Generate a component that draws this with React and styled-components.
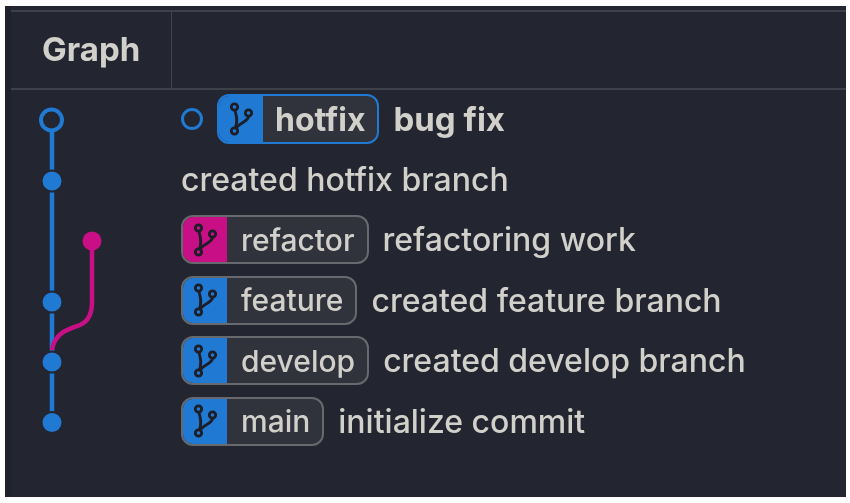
import React from 'react';
import styled, { createGlobalStyle } from 'styled-components';

const BLUE = '#2079d2';
const PINK = '#c90f86';
const BG = '#232631';

const Global = createGlobalStyle`
  html, body { margin: 0; padding: 0; background: #fff; }
`;

const Window = styled.div`
  margin: 6px 4px 0 5px;
  width: 841px;
  height: 491px;
  background: ${BG};
  display: flex;
  font-family: Inter, "Liberation Sans", sans-serif;
  color: #d2d0ca;
  filter: blur(0.7px);
  overflow: hidden;
`;

const Gutter = styled.div`
  width: 6px;
  background: #1f222c;
`;

const Main = styled.div`
  flex: 1;
  padding-top: 4px;
`;

const Header = styled.div`
  display: flex;
  height: 76px;
  border-top: 2px solid #3f414a;
  border-bottom: 2px solid #3f414a;
`;

const HeaderCell = styled.div`
  width: 161px;
  box-sizing: border-box;
  padding: 0 0 2px 31px;
  display: flex;
  align-items: center;
  font-size: 33px;
  font-weight: 700;
  border-right: 1px solid #43454e;
`;

const Body = styled.div`
  display: flex;
`;

const GraphCol = styled.svg`
  width: 170px;
  height: 370px;
  flex: none;
  display: block;
`;

const Rows = styled.div`
  display: flex;
  flex-direction: column;
  margin-top: -1px;
`;

const Row = styled.div`
  height: 60.4px;
  display: flex;
  align-items: center;
  gap: 14px;
  font-size: ${p => (p.$bold ? 33 : 32)}px;
  white-space: nowrap;
  font-weight: ${p => (p.$bold ? 700 : 450)};
`;

const HeadRing = styled.span`
  width: 16px;
  height: 16px;
  border: 3px solid ${BLUE};
  border-radius: 50%;
`;

const Chip = styled.span`
  display: flex;
  align-items: stretch;
  height: ${p => (p.$active ? 50 : 49)}px;
  box-sizing: border-box;
  border-radius: 12px;
  border: 2px solid ${p => (p.$active ? BLUE : '#67696e')};
  background: #30323c;
  overflow: hidden;
  font-size: ${p => (p.$active ? 32 : 30)}px;
`;

const ChipIcon = styled.span`
  width: ${p => (p.$active ? 47 : 44)}px;
  flex: none;
  background: ${p => p.$color};
  display: flex;
  align-items: center;
  justify-content: center;
`;

const ChipLabel = styled.span`
  padding: 0 12px 0 ${p => (p.$active ? 12 : 14)}px;
  display: flex;
  align-items: center;
`;

const BranchIcon = () => (
  <svg width="28" height="34" viewBox="0 0 28 34" fill="none" stroke="#1c1e28" strokeWidth="2.8">
    <circle cx="7.5" cy="5" r="3.2" />
    <circle cx="21.5" cy="11" r="3.2" />
    <circle cx="7.5" cy="29" r="3.2" />
    <path d="M8 8.5 C9.5 14 11 19 8.5 25.5" />
    <path d="M21.5 14.5 C21 20 13 20 9 26" />
  </svg>
);

const rows = [
  { text: 'bug fix', branch: 'hotfix', color: BLUE, head: true },
  { text: 'created hotfix branch' },
  { text: 'refactoring work', branch: 'refactor', color: PINK },
  { text: 'created feature branch', branch: 'feature', color: BLUE },
  { text: 'created develop branch', branch: 'develop', color: BLUE },
  { text: 'initialize commit', branch: 'main', color: BLUE },
];

const nodes = [91, 212, 272, 332.5];

const Graph = () => (
  <GraphCol viewBox="0 0 170 370">
    <path d="M41 30 V332" stroke={BLUE} strokeWidth="4.5" fill="none" />
    <circle cx="40.5" cy="30" r="10.5" fill={BG} stroke={BLUE} strokeWidth="4" />
    {nodes.map(y => (
      <circle key={y} cx="41" cy={y} r="10.5" fill={BLUE} stroke={BG} strokeWidth="2" />
    ))}
    <path d="M81 151 V212 C81 226 76 232 69 235 C60 239 44 241 41 260" stroke={PINK} strokeWidth="4.5" fill="none" />
    <circle cx="81" cy="151" r="9.5" fill={PINK} />
  </GraphCol>
);

export default function App() {
  return (
    <>
      <Global />
      <Window>
        <Gutter />
        <Main>
          <Header>
            <HeaderCell>Graph</HeaderCell>
          </Header>
          <Body>
            <Graph />
            <Rows>
              {rows.map(r => (
                <Row key={r.text} $bold={r.head}>
                  {r.head && <HeadRing />}
                  {r.branch && (
                    <Chip $active={r.head}>
                      <ChipIcon $color={r.color}><BranchIcon /></ChipIcon>
                      <ChipLabel $active={r.head}>{r.branch}</ChipLabel>
                    </Chip>
                  )}
                  <span>{r.text}</span>
                </Row>
              ))}
            </Rows>
          </Body>
        </Main>
      </Window>
    </>
  );
}
